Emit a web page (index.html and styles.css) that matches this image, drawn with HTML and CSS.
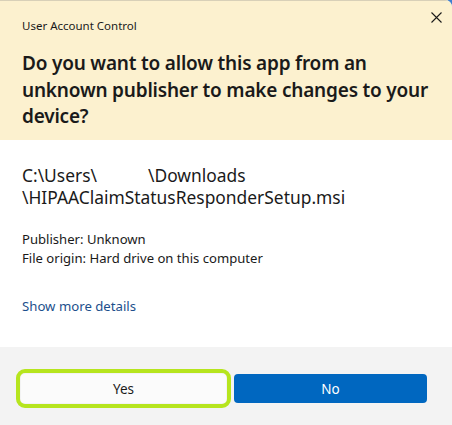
FILE: index.html
```html
<!DOCTYPE html>
<html>
<head>
<meta charset="utf-8">
<link rel="stylesheet" href="styles.css">
</head>
<body>
<div class="dialog">
  <div class="header">
    <div class="app-title">User Account Control</div>
    <button class="close" aria-label="Close">
      <svg width="11" height="11" viewBox="0 0 11 11"><path d="M0.5 0.5 L10.5 10.5 M10.5 0.5 L0.5 10.5" stroke="#1a1a1a" stroke-width="1.1" fill="none"/></svg>
    </button>
    <h1 class="question">Do you want to allow this app from an unknown publisher to make changes to your device?</h1>
  </div>
  <div class="content">
    <div class="path">C:\Users\<span class="redacted"></span>\Downloads<br>\HIPAAClaimStatusResponderSetup.msi</div>
    <div class="meta">Publisher: Unknown<br>File origin: Hard drive on this computer</div>
    <a class="details">Show more details</a>
  </div>
  <div class="footer">
    <div class="highlight"><button class="btn yes">Yes</button></div>
    <button class="btn no">No</button>
  </div>
</div>
</body>
</html>
```
FILE: styles.css
```css
html, body {
  margin: 0;
  padding: 0;
  background: #3f7fd0;
}
.dialog {
  width: 452px;
  height: 425px;
  display: flex;
  flex-direction: column;
  background: #ffffff;
  border-top-right-radius: 7px;
  overflow: hidden;
  font-family: "Noto Sans", "Open Sans", sans-serif;
  color: #1a1a1a;
}
.header {
  position: relative;
  background: #fcf1cf;
  height: 140px;
  box-sizing: border-box;
  padding: 17px 14px 0 22px;
  border-top: 1px solid #d8d0b8;
}
.app-title {
  font-size: 11.5px;
  line-height: 16px;
}
.close {
  position: absolute;
  top: 11px;
  right: 10px;
  width: 11px;
  height: 11px;
  padding: 0;
  border: 0;
  background: none;
  display: flex;
}
.question {
  margin: 16px 0 0 0;
  font-size: 19px;
  line-height: 26.5px;
  font-weight: 600;
  letter-spacing: -0.2px;
}
.content {
  flex: 1;
  padding: 24px 22px 0 22px;
}
.path {
  font-size: 17.4px;
  line-height: 22px;
  font-weight: 400;
}
.redacted {
  display: inline-block;
  width: 51px;
}
.meta {
  margin-top: 22px;
  font-size: 13.1px;
  line-height: 19px;
}
.details {
  display: block;
  margin-top: 29px;
  font-size: 13.2px;
  line-height: 19px;
  color: #1c4f8c;
}
.footer {
  height: 78px;
  background: #f3f3f3;
  display: flex;
  align-items: center;
  padding: 5px 25px 0 16px;
  gap: 3px;
  box-sizing: border-box;
}
.highlight {
  border: 4px solid #b6e51e;
  border-radius: 9px;
  padding: 1px;
  display: flex;
  width: 205px;
}
.btn {
  font-family: "Noto Sans", "Open Sans", sans-serif;
  font-size: 13.5px;
  height: 29px;
  border-radius: 4px;
  border: 0;
  padding: 0;
}
.yes {
  flex: 1;
  background: #fbfbfb;
  color: #1a1a1a;
}
.no {
  flex: 1;
  background: #0067c0;
  color: #ffffff;
}
```
